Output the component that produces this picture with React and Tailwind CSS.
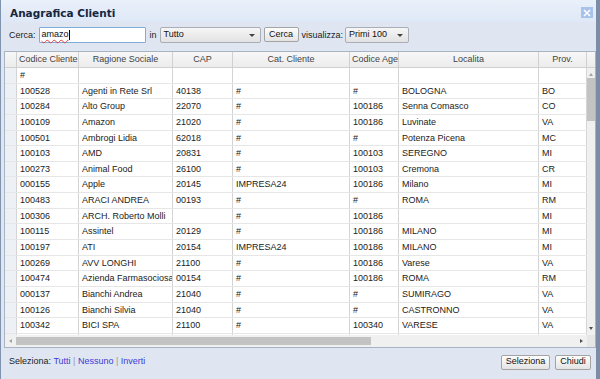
const cols = [
  { w: 62, label: 'Codice Cliente', align: 'left' },
  { w: 94, label: 'Ragione Sociale', align: 'center' },
  { w: 60, label: 'CAP', align: 'center' },
  { w: 117, label: 'Cat. Cliente', align: 'center' },
  { w: 49, label: 'Codice Agente', align: 'left' },
  { w: 140, label: 'Localita', align: 'center' },
  { w: 48, label: 'Prov.', align: 'center' },
]

const rows = [
  ['100528', 'Agenti in Rete Srl', '40138', '#', '#', 'BOLOGNA', 'BO'],
  ['100284', 'Alto Group', '22070', '#', '100186', 'Senna Comasco', 'CO'],
  ['100109', 'Amazon', '21020', '#', '100186', 'Luvinate', 'VA'],
  ['100501', 'Ambrogi Lidia', '62018', '#', '#', 'Potenza Picena', 'MC'],
  ['100103', 'AMD', '20831', '#', '100103', 'SEREGNO', 'MI'],
  ['100273', 'Animal Food', '26100', '#', '100103', 'Cremona', 'CR'],
  ['000155', 'Apple', '20145', 'IMPRESA24', '100186', 'Milano', 'MI'],
  ['100483', 'ARACI ANDREA', '00193', '#', '#', 'ROMA', 'RM'],
  ['100306', 'ARCH. Roberto Molli', '', '#', '100186', '', 'MI'],
  ['100115', 'Assintel', '20129', '#', '100186', 'MILANO', 'MI'],
  ['100197', 'ATI', '20154', 'IMPRESA24', '100186', 'MILANO', 'MI'],
  ['100269', 'AVV LONGHI', '21100', '#', '100186', 'Varese', 'VA'],
  ['100474', 'Azienda Farmasociosan', '00154', '#', '100186', 'ROMA', 'RM'],
  ['000137', 'Bianchi Andrea', '21040', '#', '#', 'SUMIRAGO', 'VA'],
  ['100126', 'Bianchi Silvia', '21040', '#', '#', 'CASTRONNO', 'VA'],
  ['100342', 'BICI SPA', '21100', '#', '100340', 'VARESE', 'VA'],
  ['', '', '', '', '', '', ''],
]

function Row({ cells }) {
  return (
    <div className="flex h-[15.65px] shrink-0 border-b border-[#e6e6e6]">
      <div className="w-[12px] shrink-0 bg-[#edf0f5] border-r border-[#d4d4d4]" />
      {cols.map((c, i) => (
        <div
          key={i}
          style={{ width: c.w }}
          className="shrink-0 overflow-hidden whitespace-nowrap border-r border-[#d4d4d4] pl-[3px] leading-[15px] text-[#222]"
        >
          {cells[i]}
        </div>
      ))}
    </div>
  )
}

function Select({ w, value }) {
  return (
    <div
      style={{ width: w }}
      className="h-[16px] flex items-center justify-between rounded-[2px] border border-[#a9adb5] bg-gradient-to-b from-[#f6f6f6] to-[#e2e2e2] pl-[3px] pr-[5px]"
    >
      <span className="text-[9px] text-[#111]">{value}</span>
      <span className="w-0 h-0 border-l-[3px] border-r-[3px] border-t-[3px] border-l-transparent border-r-transparent border-t-[#444]" />
    </div>
  )
}

function Button({ children, w }) {
  return (
    <div
      style={{ width: w }}
      className="h-[15px] flex items-center justify-center rounded-[2px] border border-[#a3a3a3] bg-gradient-to-b from-[#fdfdfd] to-[#e4e4e4] text-[9px] text-[#111]"
    >
      {children}
    </div>
  )
}

export default function App() {
  return (
    <div className="w-[600px] h-[379px] overflow-hidden flex flex-col bg-[#dfe6f1] border-l border-l-[#7f92ae] border-r-4 border-r-[#7d8ca6] font-['Liberation_Sans',Arial,sans-serif]">
      {/* title */}
      <div className="h-[22px] shrink-0 flex items-start justify-between pl-[9px] pr-[3px] pt-[7px] bg-gradient-to-b from-[#e9f0fa] to-[#dfe8f6]">
        <span className="font-['DejaVu_Sans',sans-serif] font-bold text-[10.5px] leading-[12px] text-[#15263f]">Anagrafica Clienti</span>
        <div className="w-[12px] h-[11px] bg-[#a7c3ea] flex items-center justify-center">
          <svg width="8" height="8" viewBox="0 0 8 8">
            <path d="M1 1 L7 7 M7 1 L1 7" stroke="#fff" strokeWidth="1.6" />
          </svg>
        </div>
      </div>

      {/* toolbar */}
      <div className="h-[29px] shrink-0 flex items-start pt-[5px] pl-[8px] text-[9px] text-[#222]">
        <span className="h-[16px] leading-[16px] mr-[3px]">Cerca:</span>
        <div className="w-[107px] h-[16px] border border-[#7eadd9] bg-white rounded-[1px] pl-[2px] flex items-center">
          <span className="underline decoration-wavy decoration-[#e04040] decoration-[1px] underline-offset-2 text-[#111]">amazo</span>
          <span className="w-px h-[10px] bg-black" />
        </div>
        <span className="h-[16px] leading-[16px] ml-[4px] mr-[3px]">in</span>
        <Select w={101} value="Tutto" />
        <div className="ml-[3px]">
          <Button w={35}>Cerca</Button>
        </div>
        <span className="h-[16px] leading-[16px] ml-[3px] mr-[2px]">visualizza:</span>
        <Select w={64} value="Primi 100" />
      </div>

      {/* grid */}
      <div className="ml-[3px] w-[592px] h-[297px] shrink-0 border border-[#a8b4c4] bg-white flex flex-col text-[9px]">
        <div className="h-[16px] shrink-0 flex bg-gradient-to-b from-[#f7f7f7] to-[#ececec] border-b border-[#d0d0d0] text-[#444]">
          <div className="w-[12px] shrink-0 border-r border-[#d0d0d0]" />
          {cols.map((c, i) => (
            <div
              key={i}
              style={{ width: c.w, textAlign: c.align }}
              className="shrink-0 overflow-hidden whitespace-nowrap border-r border-[#d0d0d0] px-[2px] leading-[15px]"
            >
              {c.label}
            </div>
          ))}
          <div className="flex-1" />
        </div>
        <div className="h-[267px] shrink-0 flex">
          <div className="w-[582px] shrink-0 flex flex-col overflow-hidden">
            <Row cells={['#', '', '', '', '', '', '']} />
            {rows.map((r, i) => (
              <Row key={i} cells={r} />
            ))}
          </div>
          <div className="flex-1 bg-[#f0f0f0] flex flex-col items-center">
            <span className="mt-[5px] w-0 h-0 border-l-[2.5px] border-r-[2.5px] border-b-[3px] border-l-transparent border-r-transparent border-b-[#a3a3a3]" />
            <div className="mt-[2px] w-[8px] h-[43px] bg-[#c3c3c3]" />
            <div className="flex-1" />
            <span className="mb-[5px] w-0 h-0 border-l-[2.5px] border-r-[2.5px] border-t-[3px] border-l-transparent border-r-transparent border-t-[#505050]" />
          </div>
        </div>
        <div className="h-[12px] shrink-0 flex bg-[#f0f0f0]">
          <div className="w-[582px] shrink-0 flex items-center">
            <span className="ml-[4px] w-0 h-0 border-t-[2.5px] border-b-[2.5px] border-r-[3px] border-t-transparent border-b-transparent border-r-[#a3a3a3]" />
            <div className="ml-[4px] w-[355px] h-[8px] bg-[#c3c3c3]" />
            <div className="flex-1" />
            <span className="mr-[4px] w-0 h-0 border-t-[2.5px] border-b-[2.5px] border-l-[3px] border-t-transparent border-b-transparent border-l-[#505050]" />
          </div>
          <div className="flex-1 bg-[#e6e6e6]" />
        </div>
      </div>

      {/* footer */}
      <div className="flex-1 flex items-center justify-between pl-[8px] pr-[5px] pb-[3px] text-[9px] text-[#222]">
        <div>
          Seleziona: <span className="text-[#3b3bd6]">Tutti</span>
          <span className="text-[#999]"> | </span>
          <span className="text-[#3b3bd6]">Nessuno</span>
          <span className="text-[#999]"> | </span>
          <span className="text-[#3b3bd6]">Inverti</span>
        </div>
        <div className="flex gap-[5px]">
          <Button w={49}>Seleziona</Button>
          <Button w={36}>Chiudi</Button>
        </div>
      </div>
    </div>
  )
}
